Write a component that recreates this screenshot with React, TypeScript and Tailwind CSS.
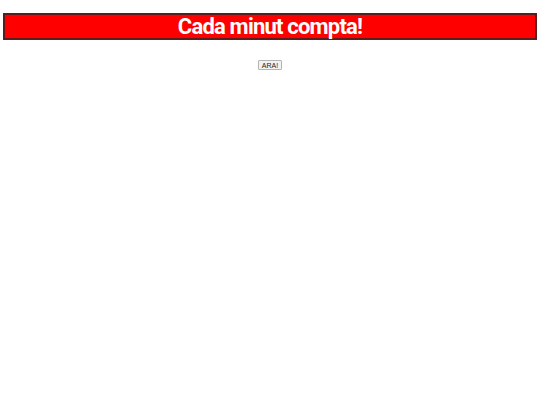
export default function App() {
  return (
    <div className="min-h-[405px] w-[540px] bg-white px-[3px] pt-[13px]">
      {/* Banner */}
      <div className="flex h-[27px] items-center justify-center border-2 border-[#5a1e1e] bg-[#ff0000]">
        <h1
          className="text-[22px] font-bold leading-none tracking-[-0.8px] text-white"
          style={{ fontFamily: 'Roboto, "Liberation Sans", sans-serif' }}
        >
          Cada minut compta!
        </h1>
      </div>

      <div className="mt-[20px] flex justify-center">
        <button
          className="h-[10px] rounded-[1px] border border-[#b4b4b4] bg-[#f2f2f2] px-[3px] text-[7px] font-normal leading-none text-[#222]"
          style={{ fontFamily: '"Liberation Sans", Arial, sans-serif' }}
        >
          ARA!
        </button>
      </div>
    </div>
  );
}
